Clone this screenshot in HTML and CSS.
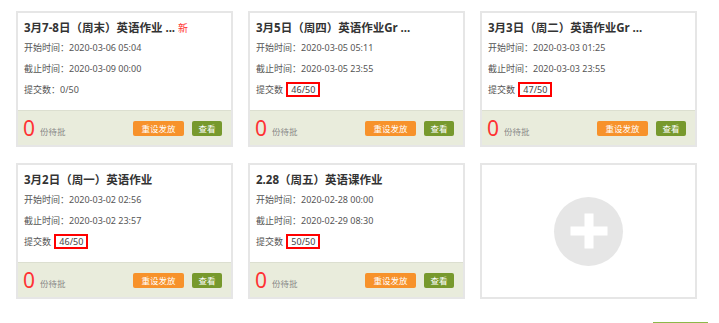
FILE: index.html
```html
<!DOCTYPE html>
<html lang="zh-CN">
<head>
    <meta charset="UTF-8">
    <meta name="viewport" content="width=device-width, initial-scale=1.0">
    <title>作业列表</title>
    <link rel="stylesheet" href="styles.css">
</head>
<body>
<section class="list">
    <div class="card">
        <div class="card-body">
            <h3 class="title">3月7-8日（周末）英语作业 ... <span class="new">新</span></h3>
            <p class="line">开始时间：2020-03-06 05:04</p>
            <p class="line">截止时间：2020-03-09 00:00</p>
            <p class="line">提交数：0/50</p>
        </div>
        <div class="card-foot">
            <span class="num">0</span><span class="wait">份待批</span>
            <span class="btn btn-orange">重设发放</span>
            <span class="btn btn-green">查看</span>
        </div>
    </div>
    <div class="card">
        <div class="card-body">
            <h3 class="title">3月5日（周四）英语作业Gr ...</h3>
            <p class="line">开始时间：2020-03-05 05:11</p>
            <p class="line">截止时间：2020-03-05 23:55</p>
            <p class="line">提交数 <span class="count">46/50</span></p>
        </div>
        <div class="card-foot">
            <span class="num">0</span><span class="wait">份待批</span>
            <span class="btn btn-orange">重设发放</span>
            <span class="btn btn-green">查看</span>
        </div>
    </div>
    <div class="card">
        <div class="card-body">
            <h3 class="title">3月3日（周二）英语作业Gr ...</h3>
            <p class="line">开始时间：2020-03-03 01:25</p>
            <p class="line">截止时间：2020-03-03 23:55</p>
            <p class="line">提交数 <span class="count">47/50</span></p>
        </div>
        <div class="card-foot">
            <span class="num">0</span><span class="wait">份待批</span>
            <span class="btn btn-orange">重设发放</span>
            <span class="btn btn-green">查看</span>
        </div>
    </div>
    <div class="card">
        <div class="card-body">
            <h3 class="title">3月2日（周一）英语作业</h3>
            <p class="line">开始时间：2020-03-02 02:56</p>
            <p class="line">截止时间：2020-03-02 23:57</p>
            <p class="line">提交数 <span class="count">46/50</span></p>
        </div>
        <div class="card-foot">
            <span class="num">0</span><span class="wait">份待批</span>
            <span class="btn btn-orange">重设发放</span>
            <span class="btn btn-green">查看</span>
        </div>
    </div>
    <div class="card">
        <div class="card-body">
            <h3 class="title">2.28（周五）英语课作业</h3>
            <p class="line">开始时间：2020-02-28 00:00</p>
            <p class="line">截止时间：2020-02-29 08:30</p>
            <p class="line">提交数 <span class="count">50/50</span></p>
        </div>
        <div class="card-foot">
            <span class="num">0</span><span class="wait">份待批</span>
            <span class="btn btn-orange">重设发放</span>
            <span class="btn btn-green">查看</span>
        </div>
    </div>
    <div class="card card-add">
        <div class="add-icon"></div>
    </div>
</section>
<div class="more">
    <span class="more-btn"></span>
</div>
</body>
</html>
```

FILE: styles.css
```css
html, body {
    overflow: hidden;
}

body {
    margin: 0;
    padding: 11px 0 0 16px;
    font-family: 'Noto Sans', 'Noto Sans CJK SC', sans-serif;
    background-color: #fff;
    color: #555;
}

.list {
    display: grid;
    grid-template-columns: repeat(3, 217px);
    column-gap: 15px;
    row-gap: 16px;
}

.card {
    box-sizing: border-box;
    height: 136px;
    border: 2px solid #e6e6e6;
    display: flex;
    flex-direction: column;
}

.card-body {
    height: 97px;
    padding: 6px 0 0 6px;
    box-sizing: border-box;
}

.title {
    margin: 0;
    font-size: 11.5px;
    line-height: 18px;
    font-weight: bold;
    color: #333;
    white-space: nowrap;
}

.new {
    color: #f33;
    font-weight: normal;
    font-size: 10px;
}

.line {
    margin: 0;
    font-size: 9px;
    line-height: 21px;
    white-space: nowrap;
}

.count {
    display: inline-block;
    border: 2px solid #f00;
    line-height: 11px;
    padding: 0 3px;
    margin-left: 1px;
    color: #444;
}

.card-foot {
    flex: 1;
    display: flex;
    align-items: center;
    background-color: #e9ecdc;
    border-top: 1px solid #dcdfd0;
    padding: 0 9px 0 5px;
}

.num {
    font-size: 21px;
    line-height: 22px;
    color: #f33;
}

.wait {
    font-size: 8.5px;
    color: #888;
    margin: 6px 0 0 5px;
}

.btn {
    height: 15px;
    line-height: 15px;
    font-size: 8.5px;
    color: #fff;
    text-align: center;
    border-radius: 2px;
}

.btn-orange {
    width: 51px;
    margin-left: auto;
    background-color: #f7922b;
}

.btn-green {
    width: 30px;
    margin-left: 8px;
    background-color: #77992d;
}

.card-add {
    align-items: center;
    justify-content: center;
}

.add-icon {
    width: 69px;
    height: 69px;
    border-radius: 50%;
    background-color: #e6e6e6;
    position: relative;
}

.add-icon::before,
.add-icon::after {
    content: '';
    position: absolute;
    background-color: #fff;
    left: 50%;
    top: 50%;
    transform: translate(-50%, -50%);
}

.add-icon::before {
    width: 37px;
    height: 9px;
}

.add-icon::after {
    width: 9px;
    height: 35px;
}

.more {
    display: flex;
    justify-content: flex-end;
    padding: 23px 11px 0 0;
}

.more-btn {
    width: 55px;
    height: 24px;
    background-color: #8cb84a;
}
```
